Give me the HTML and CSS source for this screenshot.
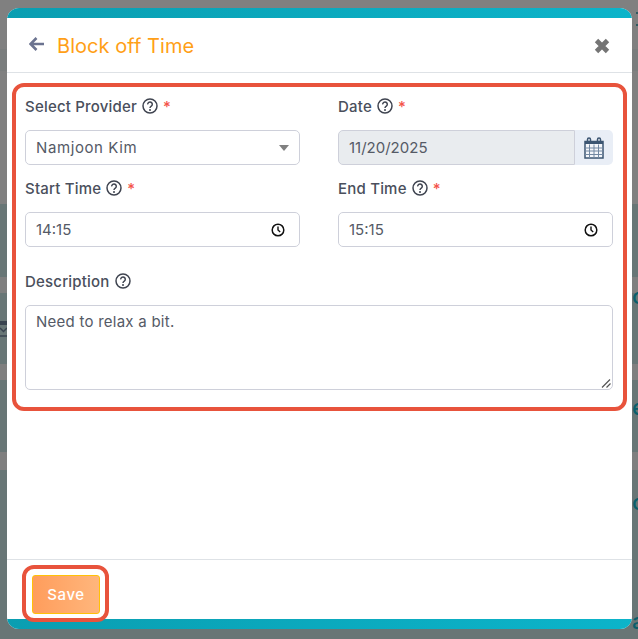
FILE: index.html
```html
<!DOCTYPE html>
<html lang="en">
<head>
    <meta charset="UTF-8">
    <meta name="viewport" content="width=device-width, initial-scale=1.0">
    <title>Block off Time</title>
    <link rel="stylesheet" href="styles.css">
</head>
<body>
    <svg class="icon-defs" width="0" height="0">
        <symbol id="help" viewBox="0 0 16 16">
            <circle cx="8" cy="8" r="7" fill="none" stroke="#3f4450" stroke-width="1.5"/>
            <path d="M5.700 6.400a2.300 2.300 0 1 1 3.600 1.800c-.9.6-1.300 1-1.300 1.800" fill="none" stroke="#3f4450" stroke-width="1.5"/>
            <circle cx="8" cy="12" r="1" fill="#3f4450"/>
        </symbol>
        <symbol id="clock" viewBox="0 0 14 14">
            <circle cx="7" cy="7" r="5.800" fill="none" stroke="#111" stroke-width="1.500"/>
            <path d="M7 3.600V7l2.200 2" fill="none" stroke="#111" stroke-width="1.400"/>
        </symbol>
    </svg>

    <div class="backdrop">
        <!-- page behind the dialog, only its edges show -->
        <span class="behind-dot dot-one"></span>
        <span class="behind-dot dot-two"></span>
        <span class="behind-letter letter-c">c</span>
        <span class="behind-letter letter-e">e</span>
        <span class="behind-letter letter-o">o</span>
        <span class="behind-letter letter-a">a</span>
        <svg class="behind-chevron" width="7" height="18" viewBox="0 0 7 18"><path d="M0 1h7v4H0z" fill="#3a4450"/><path d="M0 8l3.500 3.500L7 8M0 16h7" fill="none" stroke="#3a4450" stroke-width="1.500"/></svg>

        <div class="modal">
            <div class="modal-bar"></div>
            <header class="modal-header">
                <div class="modal-title">
                    <svg class="back-icon" width="16" height="14" viewBox="0 0 16 14"><path d="M7.500 1 1.500 7l6 6M2 7h13" fill="none" stroke="#6b7390" stroke-width="2.600"/></svg>
                    <h1>Block off Time</h1>
                </div>
                <svg class="close-icon" width="18" height="18" viewBox="0 0 18 18"><path d="M3.500 3.500l11 11M14.500 3.500l-11 11" fill="none" stroke="#757575" stroke-width="4.800"/></svg>
            </header>

            <div class="modal-body">
                <form class="highlight-box">
                    <div class="form-grid">
                        <div class="field">
                            <label>Select Provider
                                <svg class="help-icon" width="16" height="16"><use href="#help"/></svg>
                                <span class="req">*</span></label>
                            <div class="control select-control">
                                <span class="provider-name">Namjoon Kim</span>
                                <span class="caret"></span>
                            </div>
                        </div>
                        <div class="field">
                            <label>Date
                                <svg class="help-icon" width="16" height="16"><use href="#help"/></svg>
                                <span class="req">*</span></label>
                            <div class="date-group">
                                <div class="control date-input">11/20/2025</div>
                                <div class="date-addon">
                                    <svg width="20" height="22" viewBox="0 0 20 22">
                                        <rect x="1" y="4.500" width="18" height="16.500" fill="#f4f6fa" stroke="#3c5672" stroke-width="1.500"/>
                                        <rect x="1" y="4" width="18" height="3" fill="#3c5672"/>
                                        <path d="M3.500 6V2.500a1.500 1.500 0 0 1 3 0V6M13.500 6V2.500a1.500 1.500 0 0 1 3 0V6" fill="none" stroke="#3c5672" stroke-width="1.500"/>
                                        <path d="M1 11h18M1 14h18M1 17.500h18M5.500 7.500V21M10 7.500V21M14.500 7.500V21" fill="none" stroke="#7288a2" stroke-width="1"/>
                                    </svg>
                                </div>
                            </div>
                        </div>
                        <div class="field">
                            <label>Start Time
                                <svg class="help-icon" width="16" height="16"><use href="#help"/></svg>
                                <span class="req">*</span></label>
                            <div class="control time-control">
                                <span>14:15</span>
                                <svg width="14" height="14"><use href="#clock"/></svg>
                            </div>
                        </div>
                        <div class="field">
                            <label>End Time
                                <svg class="help-icon" width="16" height="16"><use href="#help"/></svg>
                                <span class="req">*</span></label>
                            <div class="control time-control">
                                <span>15:15</span>
                                <svg width="14" height="14"><use href="#clock"/></svg>
                            </div>
                        </div>
                    </div>

                    <div class="field description-field">
                        <label>Description
                            <svg class="help-icon" width="16" height="16"><use href="#help"/></svg>
                        </label>
                        <div class="control textarea-control">
                            Need to relax a bit.
                            <svg class="resize-grip" width="10" height="10" viewBox="0 0 10 10"><path d="M1 9.500 9 1.500M5.500 9.500 9.500 5.500" stroke="#555" stroke-width="1.200" fill="none"/></svg>
                        </div>
                    </div>
                </form>
            </div>

            <footer class="modal-footer">
                <div class="save-ring">
                    <button type="button" class="save-button">Save</button>
                </div>
            </footer>
            <div class="modal-bar"></div>
        </div>
    </div>
</body>
</html>
```

FILE: styles.css
```css
* {
    box-sizing: border-box;
}

body {
    margin: 0;
    font-family: "Inter", "Open Sans", sans-serif;
    color: #4a4f5c;
}

.icon-defs {
    position: absolute;
}

.backdrop {
    position: relative;
    height: 639px;
    overflow: hidden;
    padding: 8px 6px 10px 7px;
    background: linear-gradient(to bottom,
        #808080 0 49px, #7a7d7d 49px 71px, #808080 71px 204px,
        #687676 204px 277px, #7f7f7f 277px 293px,
        #687676 293px 364px, #7f7f7f 364px 380px,
        #687676 380px 452px, #7f7f7f 452px 470px,
        #687676 470px 639px);
}

.behind-letter {
    position: absolute;
    left: 632px;
    font-size: 22px;
    line-height: 22px;
    font-weight: 500;
    color: #0a5f6c;
}

.letter-c { top: 285px; }
.letter-e { top: 396px; }
.letter-o { top: 491px; }
.letter-a { top: 610px; }

.behind-dot {
    position: absolute;
    left: 636px;
    width: 2px;
    height: 2px;
    background: #2f5a60;
}

.dot-one { top: 12px; }
.dot-two { top: 24px; }

.behind-chevron {
    position: absolute;
    left: 0;
    top: 320px;
}

.modal {
    position: relative;
    height: 621px;
    display: flex;
    flex-direction: column;
    background: #fff;
    border-radius: 12px;
    overflow: hidden;
}

.modal-bar {
    height: 10px;
    flex: none;
    background: linear-gradient(to right, #0a9eb1, #0cb4ca);
}

.modal-header {
    height: 55px;
    flex: none;
    display: flex;
    align-items: center;
    justify-content: space-between;
    padding: 2px 21px 0 22px;
    border-bottom: 1px solid #dee2e6;
}

.modal-title {
    display: flex;
    align-items: center;
    gap: 12px;
}

.modal-title h1 {
    margin: 0;
    font-size: 20px;
    font-weight: 400;
    letter-spacing: 0.05px;
    color: #ff9f17;
}

.back-icon {
    margin-top: -4px;
}

.modal-body {
    flex: 1;
    padding: 10px 5px 0 5px;
}

.highlight-box {
    height: 328px;
    padding: 9px 10px 0 9px;
    border: 4px solid #e8533c;
    border-radius: 12px;
}

.form-grid {
    display: grid;
    grid-template-columns: 275px 275px;
    column-gap: 38px;
    row-gap: 13px;
}

.field label {
    height: 20px;
    display: flex;
    align-items: center;
    gap: 5px;
    font-size: 15px;
    font-weight: 450;
    letter-spacing: 0.2px;
    color: #4a4f5c;
}

.help-icon {
    flex: none;
}

.req {
    color: #f4534a;
}

.control {
    height: 35px;
    margin-top: 14px;
    padding: 0 10px;
    border: 1px solid #ced0da;
    border-radius: 5px;
    background: #fff;
    font-size: 15px;
    color: #555a66;
}

.select-control,
.time-control {
    display: flex;
    align-items: center;
    justify-content: space-between;
}

.provider-name {
    letter-spacing: 0.6px;
}

.time-control svg {
    margin-right: 4px;
}

.caret {
    width: 0;
    height: 0;
    border-left: 5px solid transparent;
    border-right: 5px solid transparent;
    border-top: 6px solid #808080;
}

.date-group {
    display: flex;
}

.date-input {
    flex: 1;
    display: flex;
    align-items: center;
    background: #e9ecef;
    border-radius: 5px 0 0 5px;
}

.date-addon {
    width: 38px;
    height: 35px;
    margin-top: 14px;
    display: flex;
    align-items: center;
    justify-content: center;
    background: #e9eef6;
    border-radius: 0 5px 5px 0;
}

.description-field {
    margin-top: 24px;
}

.textarea-control {
    position: relative;
    height: 85px;
    padding-top: 6px;
    letter-spacing: 0.25px;
}

.resize-grip {
    position: absolute;
    right: 1px;
    bottom: 1px;
}

.modal-footer {
    height: 60px;
    flex: none;
    padding: 5px 0 0 15px;
    border-top: 1px solid #dee2e6;
}

.save-ring {
    position: relative;
    z-index: 1;
    width: 87px;
    height: 57px;
    padding: 6px;
    border: 4px solid #e8533c;
    border-radius: 12px;
    background: #fff;
}

.save-button {
    display: block;
    width: 68px;
    height: 39px;
    border: 1px solid #ffc107;
    border-radius: 3px;
    background: linear-gradient(to right, #ff9d5c, #ffb67c);
    color: #fff;
    font-family: inherit;
    font-size: 15px;
    font-weight: 450;
    letter-spacing: 0.6px;
}
```
